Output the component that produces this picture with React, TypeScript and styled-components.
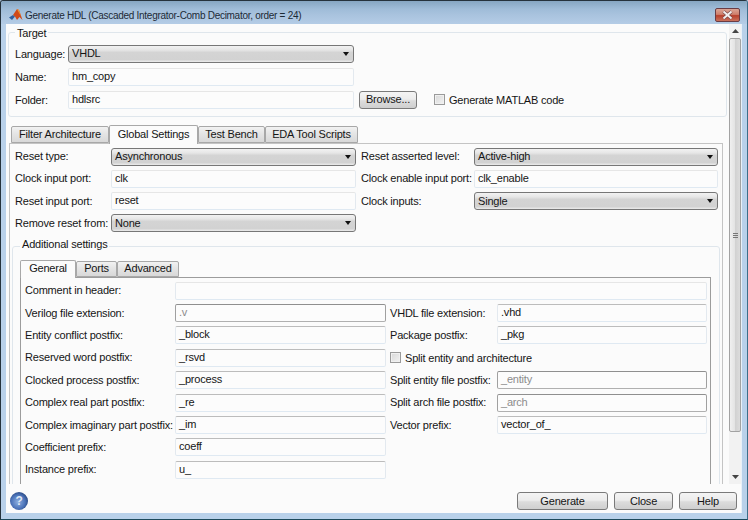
import React from "react";
import styled, { createGlobalStyle } from "styled-components";

const Global = createGlobalStyle`
  html, body { margin: 0; padding: 0; background: #b8d0e8; }
  body { font-family: "Liberation Sans", "DejaVu Sans", sans-serif; font-size: 11px; letter-spacing: -0.2px; color: #151515; }
  * { box-sizing: border-box; }
`;

const Frame = styled.div`
  width: 748px; height: 520px; overflow: hidden; display: flex; flex-direction: column;
  background: #b9d1ea;
  border: 1px solid #25323c; border-bottom-color: #1d4a5c; border-right-color: #3c6f8a;
  border-radius: 3px 3px 0 0;
`;
const TitleBar = styled.div`
  height: 23px; flex: none; display: flex; align-items: center; padding: 5px 7px 0 8px;
  background: linear-gradient(to bottom, #86a6c2 0, #9fbcd8 8px, #a9c3de 14px, #b4cce6 100%);
`;
const Logo = styled.svg`width: 14px; height: 14px; flex: none; margin-right: 2px;`;
const TitleText = styled.div`flex: 1; font-size: 10px; letter-spacing: -0.28px; color: #1c2a36; white-space: nowrap;`;
const CloseBtn = styled.div`
  width: 25px; height: 14px; border: 1px solid #6a3c44; border-radius: 2px; display: flex; align-items: center; justify-content: center;
  background: linear-gradient(to bottom, #dba596 0, #cf7f6c 45%, #b8402c 55%, #c9715c 100%);
`;
const Body = styled.div`
  flex: 1; min-height: 0; margin: 0 5px 6px 5px; background: #fbfbfb; display: flex; flex-direction: column;
  border-right: 1px solid #e9f1f8;
`;
const ScrollArea = styled.div`height: 460px; flex: none; display: flex; overflow: hidden;`;
const Main = styled.div`width: 723px; flex: none; padding: 8px 0 0 2px; overflow: hidden;`;
const ScrollBar = styled.div`
  width: 12px; flex: none; display: flex; flex-direction: column; align-items: center; background: #f2f2f2;
`;
const ArrowBtn = styled.div`height: 14px; width: 100%; flex: none; display: flex; align-items: center; justify-content: center;`;
const Thumb = styled.div`
  width: 12px; height: 394px; flex: none; border: 1px solid #a2a2a2; border-radius: 2px; display: flex; align-items: center; justify-content: center;
  background: linear-gradient(to right, #f0f0f0, #e4e4e4 45%, #d2d2d2 55%, #dcdcdc);
`;
const TrackFill = styled.div`flex: 1;`;
const Grip = styled.div`width: 5px; height: 5px; border-top: 1px solid #777; border-bottom: 1px solid #777;
  &::after { content: ""; display: block; margin-top: 1px; height: 1px; background: #777; }`;
const Group = styled.div`
  position: relative; border: 1px solid #dfe6ec; border-radius: 3px;
`;
const TargetGroup = styled(Group)`height: 85px; width: 719px; padding: 12px 0 0 6px; display: flex; flex-direction: column; gap: 5.5px;`;
const Legend = styled.div<{ $left: number; $top: number }>`
  position: absolute; top: ${p => p.$top}px; left: ${p => p.$left}px; background: #fbfbfb; padding: 0 2px; line-height: 13px;
`;
const TargetRow = styled.div`display: flex; align-items: center; height: 17.5px;`;
const TargetLabel = styled.div`width: 53px; flex: none;`;
const Label = styled.div`white-space: nowrap; line-height: 17px;`;
const Input = styled.div<{ $tone?: "faint" | "dark" | "mid"; $off?: boolean; $w?: number }>`
  height: 18px; padding: 0 3px; line-height: 15px; white-space: nowrap; background: #fcfcfc; border-radius: 2px;
  width: ${p => (p.$w ? `${p.$w}px` : "auto")}; flex: none;
  color: ${p => (p.$off ? "#8c8c8c" : "#151515")};
  border: 1px solid ${p => (p.$tone === "dark" ? "#a0a0a0" : "#e3e9ef")};
  border-top-color: ${p => (p.$tone === "dark" ? "#8f8f8f" : p.$tone === "mid" ? "#bcbcbc" : p.$tone === "faint" ? "#e6e6e6" : "#dcdcdc")};
  border-bottom-color: ${p => (p.$tone === "dark" ? "#b0b0b0" : "#dfe9f2")};
`;
const Select = styled.div<{ $w?: number }>`
  height: 18px; padding: 0 4px 0 3px; display: flex; align-items: center; justify-content: space-between; line-height: 15px;
  width: ${p => (p.$w ? `${p.$w}px` : "auto")}; flex: none;
  border: 1px solid #777; border-radius: 3px;
  background: linear-gradient(to bottom, #f2f2f2 0, #e6e6e6 25%, #d4d4d4 40%, #d2d2d2 85%, #ececec 100%);
`;
const Caret = styled.span`width: 0; height: 0; border-left: 3.5px solid transparent; border-right: 3.5px solid transparent; border-top: 4px solid #111;`;
const Btn = styled.div<{ $w: number }>`
  width: ${p => p.$w}px; height: 18px; flex: none; border: 1px solid #7a7a7a; border-radius: 3px; display: flex; align-items: center; justify-content: center;
  background: linear-gradient(to bottom, #f4f4f4 0, #ececec 45%, #dcdcdc 55%, #cfcfcf 100%);
  line-height: 15px;
`;
const BrowseBtn = styled(Btn)`margin-left: 5px;`;
const CheckBox = styled.span`
  width: 11px; height: 11px; flex: none; border: 1px solid #9a9a9a; background: linear-gradient(135deg, #d8d8d8, #f2f2f2); box-shadow: inset 0 0 0 1px #f0f0f0; display: inline-block;
`;
const CheckRow = styled.div<{ $ml?: number }>`display: flex; align-items: center; gap: 4px; margin-left: ${p => p.$ml ?? 0}px; white-space: nowrap;`;
const TabStrip = styled.div<{ $ml: number; $mt: number; $h: number }>`
  display: flex; align-items: flex-end; height: ${p => p.$h}px; margin: ${p => p.$mt}px 0 0 ${p => p.$ml}px; position: relative; z-index: 1;
`;
const Tab = styled.div<{ $w: number; $active?: boolean }>`
  width: ${p => p.$w}px; flex: none; display: flex; align-items: center; justify-content: center; white-space: nowrap;
  height: ${p => (p.$active ? "100%" : "calc(100% - 2px)")};
  margin-bottom: ${p => (p.$active ? "-1px" : "0")};
  border: 1px solid #a8a8a8; border-bottom: ${p => (p.$active ? "none" : "1px solid #a8a8a8")};
  padding-bottom: ${p => (p.$active ? "3px" : "1px")};
  background: ${p => (p.$active ? "#fbfbfb" : "linear-gradient(to bottom, #f2f2f2 0, #e6e6e6 40%, #d8d8d8 100%)")};
  border-radius: 2px 2px 0 0;
`;
const OuterPanel = styled.div`
  width: 714px; height: 400px; margin-left: 1px; border: 1px solid #c4c4c4; border-bottom: none; padding: 4px 2px 0 2px;
`;
const GlobalGrid = styled.div`
  display: grid; grid-template-columns: 96px 245px 118px 244px; grid-auto-rows: 17px; row-gap: 5.33px; padding-left: 3px; align-items: center;
`;
const RightLabel = styled(Label)`padding-left: 5px;`;
const AddGroup = styled(Group)`margin-top: 14px; height: 300px; padding: 12px 8px 0 7px;`;
const InnerPanel = styled.div`
  height: 260px; border: 1px solid #9c9c9c; border-bottom: none; padding: 4px 3px 0 4px;
`;
const InnerGrid = styled.div`
  display: grid; grid-template-columns: 150px 211px 111px 210px; grid-auto-rows: 17.4px; row-gap: 5px; align-items: center;
`;
const FullCell = styled.div`grid-column: 2 / span 3;`;
const ILabel = styled(Label)`padding-left: 4px;`;
const Footer = styled.div`flex: 1; display: flex; align-items: flex-start; padding: 8px 4px 0 4px; gap: 6px;`;
const HelpIcon = styled.div`
  width: 18px; height: 18px; border-radius: 50%; flex: none; margin-right: auto; display: flex; align-items: center; justify-content: center;
  background: radial-gradient(circle at 45% 55%, #8fb0e0 0, #4a72b8 50%, #2c4c86 72%, #c6ccd6 78%, #aab2be 100%);
  color: #dfe7f4; font-weight: bold; font-size: 12px; line-height: 18px; font-family: "Liberation Sans", sans-serif;
`;

const Chev = ({ up }: { up?: boolean }) => (
  <svg width="7" height="4" viewBox="0 0 7 4"><path d={up ? "M0 4 L3.5 0 L7 4 Z" : "M0 0 L3.5 4 L7 0 Z"} fill="#444" /></svg>
);

const rows: [string, React.ReactNode, React.ReactNode, React.ReactNode][] = [
  ["Verilog file extension:", <Input $tone="dark" $off>.v</Input>, <ILabel>VHDL file extension:</ILabel>, <Input $tone="mid">.vhd</Input>],
  ["Entity conflict postfix:", <Input $tone="mid">_block</Input>, <ILabel>Package postfix:</ILabel>, <Input $tone="mid">_pkg</Input>],
  ["Reserved word postfix:", <Input $tone="mid">_rsvd</Input>, <CheckRow $ml={4}><CheckBox />Split entity and architecture</CheckRow>, <span />],
  ["Clocked process postfix:", <Input $tone="mid">_process</Input>, <ILabel>Split entity file postfix:</ILabel>, <Input $tone="dark" $off>_entity</Input>],
  ["Complex real part postfix:", <Input $tone="mid">_re</Input>, <ILabel>Split arch file postfix:</ILabel>, <Input $tone="dark" $off>_arch</Input>],
  ["Complex imaginary part postfix:", <Input $tone="mid">_im</Input>, <ILabel>Vector prefix:</ILabel>, <Input $tone="mid">vector_of_</Input>],
  ["Coefficient prefix:", <Input $tone="mid">coeff</Input>, <span />, <span />],
  ["Instance prefix:", <Input $tone="mid">u_</Input>, <span />, <span />],
];

export default function App() {
  return (
    <Frame>
      <Global />
      <TitleBar>
        <Logo viewBox="0 0 14 14">
          <path d="M0 9.5 L4 7 L6 8.5 L3 12 Z" fill="#2f5f9f" />
          <path d="M4 7 L8 1 L10 2 L13.5 12 L10.5 9 L8 12 L6 8.5 Z" fill="#d04a1a" />
          <path d="M8 1 L10 2 L12 8 L9.5 4 Z" fill="#ee9a36" />
        </Logo>
        <TitleText>Generate HDL (Cascaded Integrator-Comb Decimator, order = 24)</TitleText>
        <CloseBtn>
          <svg width="13" height="10" viewBox="0 0 13 10">
            <path d="M2.5 1.5 L10.5 8.5 M10.5 1.5 L2.5 8.5" stroke="#7a4a48" strokeWidth="3.4" />
            <path d="M2.5 1.5 L10.5 8.5 M10.5 1.5 L2.5 8.5" stroke="#f2eeee" strokeWidth="2" />
          </svg>
        </CloseBtn>
      </TitleBar>
      <Body>
        <ScrollArea>
          <Main>
            <TargetGroup>
              <Legend $left={6} $top={-6}>Target</Legend>
              <TargetRow><TargetLabel>Language:</TargetLabel><Select $w={286}>VHDL<Caret /></Select></TargetRow>
              <TargetRow><TargetLabel>Name:</TargetLabel><Input $w={286} $tone="faint">hm_copy</Input></TargetRow>
              <TargetRow>
                <TargetLabel>Folder:</TargetLabel><Input $w={286} $tone="faint">hdlsrc</Input>
                <BrowseBtn $w={58}>Browse...</BrowseBtn>
                <CheckRow $ml={17}><CheckBox />Generate MATLAB code</CheckRow>
              </TargetRow>
            </TargetGroup>
            <TabStrip $ml={3} $mt={7} $h={19}>
              <Tab $w={98}>Filter Architecture</Tab>
              <Tab $w={89} $active>Global Settings</Tab>
              <Tab $w={67}>Test Bench</Tab>
              <Tab $w={93}>EDA Tool Scripts</Tab>
            </TabStrip>
            <OuterPanel>
              <GlobalGrid>
                <Label>Reset type:</Label><Select>Asynchronous<Caret /></Select>
                <RightLabel>Reset asserted level:</RightLabel><Select>Active-high<Caret /></Select>
                <Label>Clock input port:</Label><Input $tone="faint">clk</Input>
                <RightLabel>Clock enable input port:</RightLabel><Input $tone="faint">clk_enable</Input>
                <Label>Reset input port:</Label><Input $tone="faint">reset</Input>
                <RightLabel>Clock inputs:</RightLabel><Select>Single<Caret /></Select>
                <Label>Remove reset from:</Label><Select>None<Caret /></Select>
              </GlobalGrid>
              <AddGroup>
                <Legend $left={7} $top={-9}>Additional settings</Legend>
                <TabStrip $ml={0} $mt={0} $h={18}>
                  <Tab $w={56} $active>General</Tab>
                  <Tab $w={41}>Ports</Tab>
                  <Tab $w={62}>Advanced</Tab>
                </TabStrip>
                <InnerPanel>
                  <InnerGrid>
                    <Label>Comment in header:</Label>
                    <FullCell><Input $tone="faint" /></FullCell>
                    {rows.map(([l, a, b, c]) => (
                      <React.Fragment key={l}>
                        <Label>{l}</Label>{a}{b}{c}
                      </React.Fragment>
                    ))}
                  </InnerGrid>
                </InnerPanel>
              </AddGroup>
            </OuterPanel>
          </Main>
          <ScrollBar>
            <ArrowBtn><Chev up /></ArrowBtn>
            <Thumb><Grip /></Thumb>
            <TrackFill />
            <ArrowBtn><Chev /></ArrowBtn>
          </ScrollBar>
        </ScrollArea>
        <Footer>
          <HelpIcon>?</HelpIcon>
          <Btn $w={91}>Generate</Btn>
          <Btn $w={59}>Close</Btn>
          <Btn $w={58}>Help</Btn>
        </Footer>
      </Body>
    </Frame>
  );
}
